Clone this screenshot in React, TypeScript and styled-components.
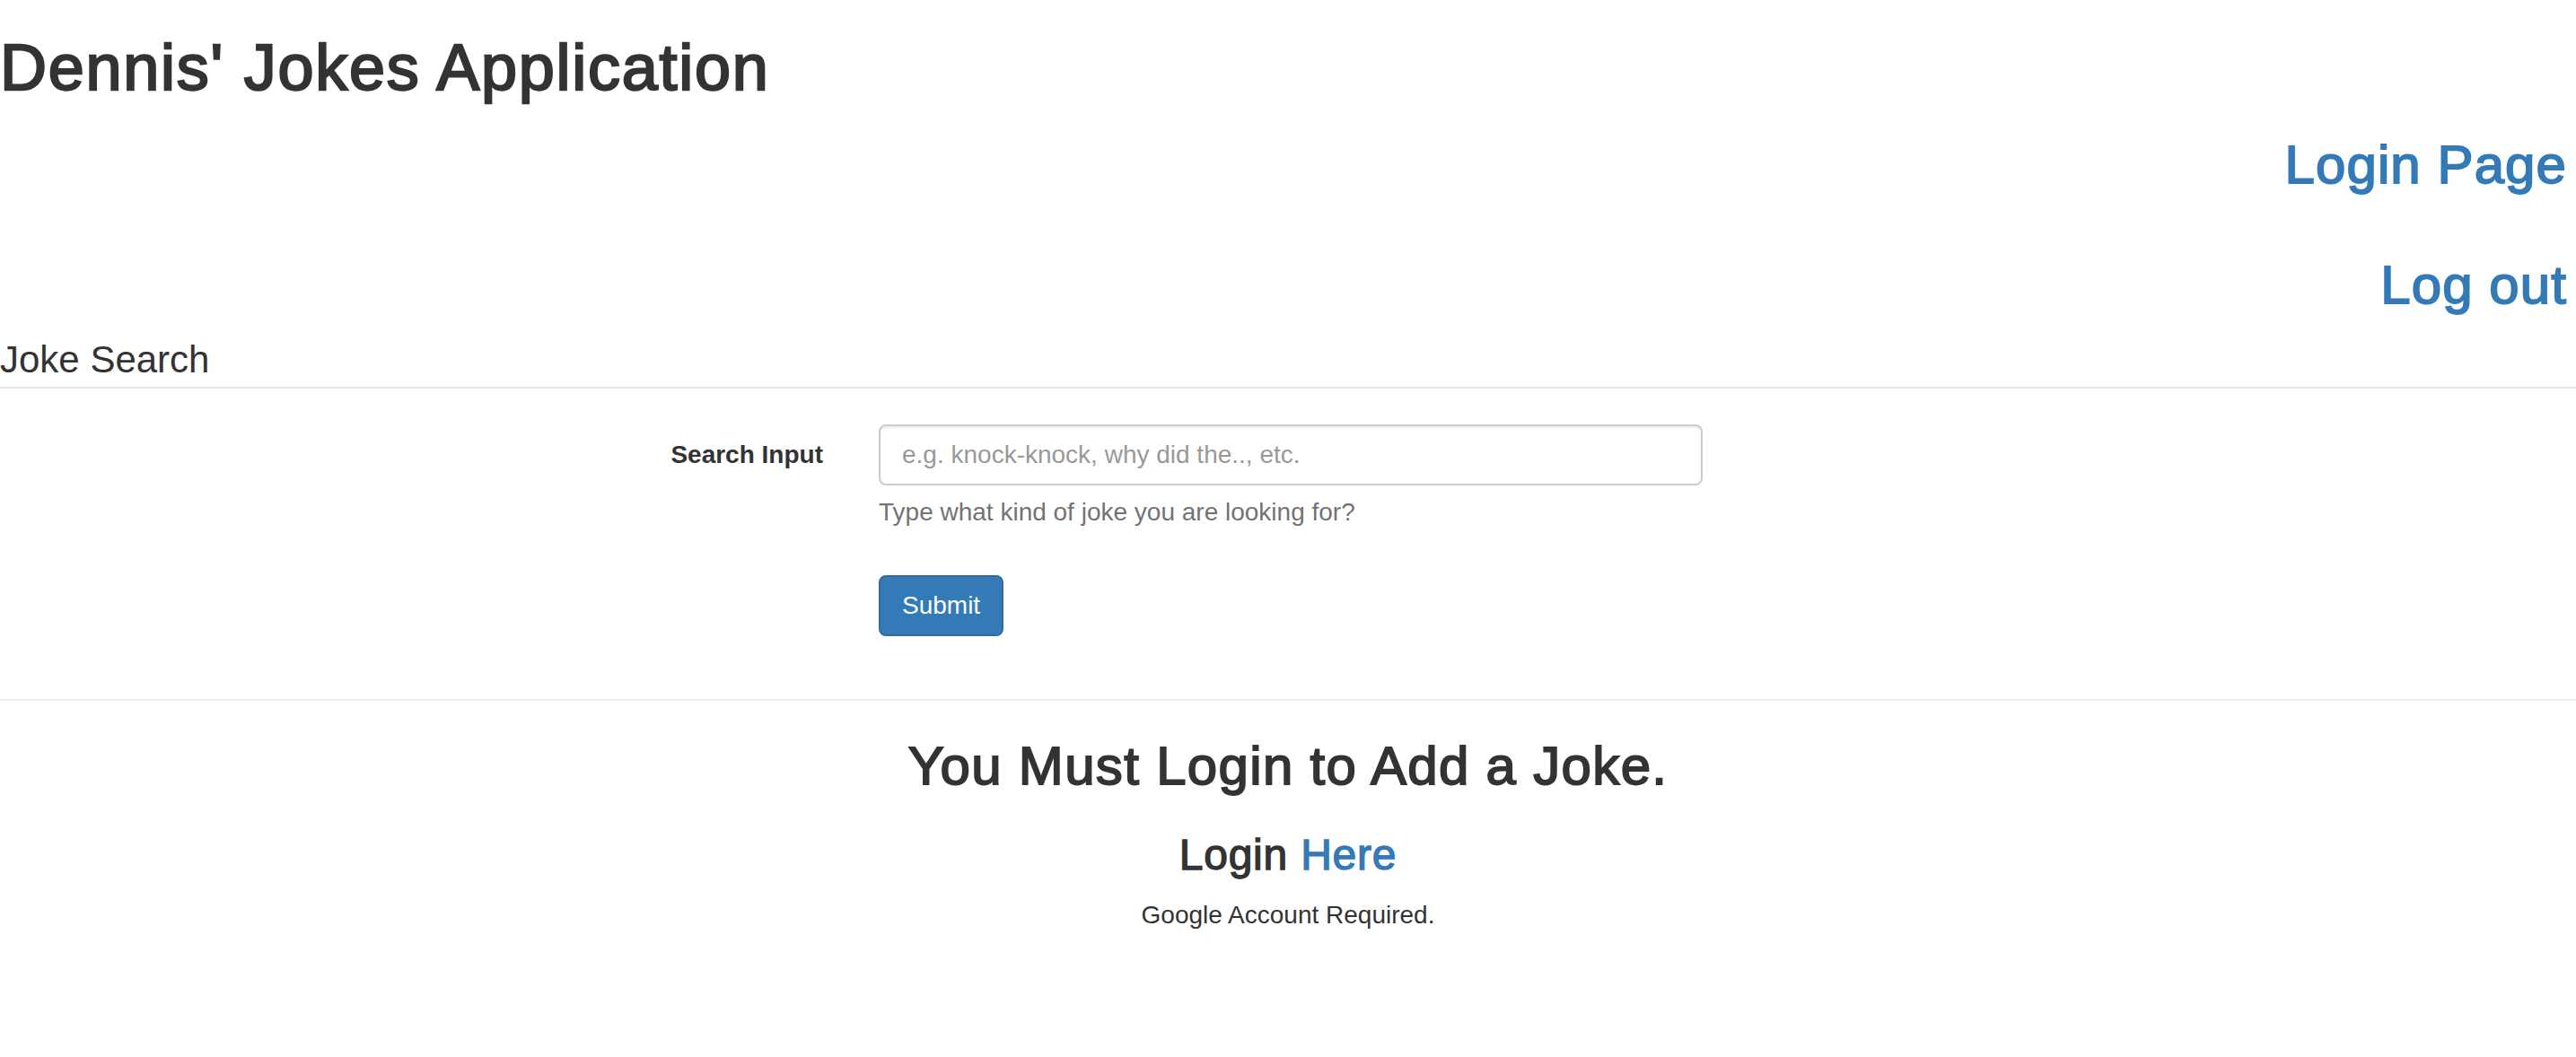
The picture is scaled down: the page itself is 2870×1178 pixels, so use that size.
import React from "react";
import styled, { createGlobalStyle } from "styled-components";

const GlobalStyle = createGlobalStyle`
  html, body {
    margin: 0;
    padding: 0;
    background: #ffffff;
  }
  body {
    font-family: "Liberation Sans", Arial, Helvetica, sans-serif;
    font-size: 28px;
    line-height: 1.42857;
    color: #333333;
  }
  * { box-sizing: border-box; }
`;

const Page = styled.div`
  width: 100%;
`;

const Title = styled.h1`
  margin: 36px 0 0;
  font-size: 72px;
  line-height: 1.1;
  font-weight: 400;
  letter-spacing: 0.024em;
  -webkit-text-stroke: 0.032em #333333;
  color: #333333;
`;

const Nav = styled.nav`
  display: flex;
  flex-direction: column;
  align-items: flex-end;
  padding-right: 10px;
  margin-bottom: 20px;
`;

const NavItem = styled.h2<{ $top: number }>`
  margin: ${(p) => p.$top}px 0 0;
  font-size: 60px;
  line-height: 1.1;
  font-weight: 400;
  letter-spacing: 0.018em;
  -webkit-text-stroke: 0.03em #337ab7;
`;

const Link = styled.a`
  color: #337ab7;
  text-decoration: none;
  -webkit-text-stroke-color: #337ab7;
`;

const SearchForm = styled.form`
  margin: 0;
`;

const SectionTitle = styled.div`
  font-size: 42px;
  line-height: 60px;
  color: #333333;
  border-bottom: 2px solid #e5e5e5;
  margin-bottom: 40px;
`;

const FormRow = styled.div<{ $last?: boolean }>`
  display: grid;
  grid-template-columns: 917px 918px;
  column-gap: 62px;
  margin-bottom: ${(p) => (p.$last ? 0 : 30)}px;
`;

const Label = styled.label`
  text-align: right;
  font-weight: 700;
  padding-top: 14px;
  line-height: 40px;
`;

const Field = styled.div`
  display: flex;
  flex-direction: column;
  align-items: flex-start;
`;

const Input = styled.input`
  width: 100%;
  height: 68px;
  padding: 12px 24px;
  border: 2px solid #cccccc;
  border-radius: 8px;
  font-family: inherit;
  font-size: 28px;
  line-height: 40px;
  color: #555555;
  background: #ffffff;
  box-shadow: inset 0 2px 2px rgba(0, 0, 0, 0.075);
  outline: none;
  &::placeholder {
    color: #999999;
  }
`;

const Help = styled.span`
  display: block;
  margin: 10px 0 20px;
  color: #737373;
  line-height: 40px;
`;

const SubmitButton = styled.button`
  padding: 12px 24px;
  font-family: inherit;
  font-size: 28px;
  line-height: 40px;
  color: #ffffff;
  background: #337ab7;
  border: 2px solid #2e6da4;
  border-radius: 8px;
  cursor: pointer;
`;

const Divider = styled.hr`
  border: 0;
  border-top: 2px solid #eeeeee;
  margin: 70px 0 40px;
`;

const Notice = styled.section`
  text-align: center;
`;

const NoticeTitle = styled.h2`
  margin: 0 0 40px;
  font-size: 60px;
  line-height: 1.1;
  font-weight: 400;
  letter-spacing: 0.022em;
  -webkit-text-stroke: 0.03em #333333;
`;

const NoticeSub = styled.h3`
  margin: 0 0 20px;
  font-size: 48px;
  line-height: 1.1;
  font-weight: 400;
  letter-spacing: 0.016em;
  -webkit-text-stroke: 0.028em #333333;
`;

const NoticeText = styled.p`
  margin: 0;
  line-height: 40px;
`;

export default function App() {
  return (
    <Page>
      <GlobalStyle />
      <Title>Dennis' Jokes Application</Title>
      <Nav>
        <NavItem $top={36}>
          <Link href="#">Login Page</Link>
        </NavItem>
        <NavItem $top={68}>
          <Link href="#">Log out</Link>
        </NavItem>
      </Nav>
      <SearchForm onSubmit={(e) => e.preventDefault()}>
        <SectionTitle>Joke Search</SectionTitle>
        <FormRow>
          <Label htmlFor="search">Search Input</Label>
          <Field>
            <Input id="search" type="text" placeholder="e.g. knock-knock, why did the.., etc." />
            <Help>Type what kind of joke you are looking for?</Help>
          </Field>
        </FormRow>
        <FormRow $last>
          <span />
          <Field>
            <SubmitButton type="submit">Submit</SubmitButton>
          </Field>
        </FormRow>
      </SearchForm>
      <Divider />
      <Notice>
        <NoticeTitle>You Must Login to Add a Joke.</NoticeTitle>
        <NoticeSub>
          Login <Link href="#">Here</Link>
        </NoticeSub>
        <NoticeText>Google Account Required.</NoticeText>
      </Notice>
    </Page>
  );
}
